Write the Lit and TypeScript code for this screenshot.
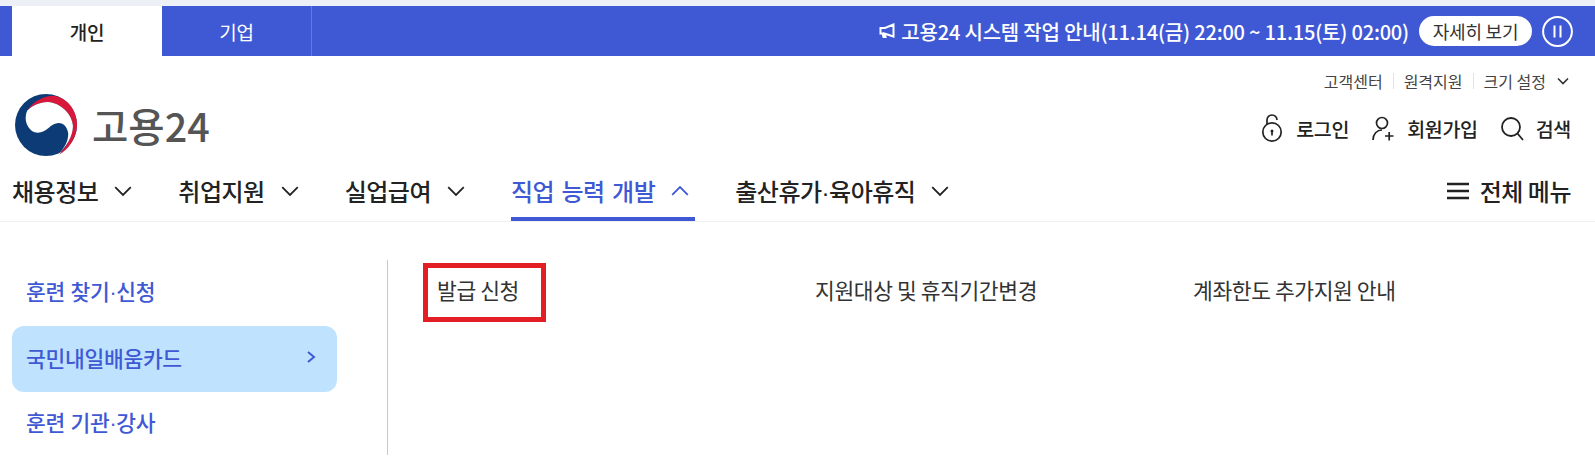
import { LitElement, html, css } from "lit";
import { customElement } from "lit/decorators.js";

const chevDown = html`<svg class="chev" viewBox="0 0 18 18" fill="none" stroke="currentColor" stroke-width="1.6"><path d="M2 5.5 9 12.5 16 5.5"/></svg>`;
const chevUp = html`<svg class="chev" viewBox="0 0 18 18" fill="none" stroke="currentColor" stroke-width="1.6"><path d="M2 12.5 9 5.5 16 12.5"/></svg>`;
const dot = html`<span class="dot">·</span>`;

@customElement("app-root")
export class AppRoot extends LitElement {
  static styles = css`
    :host { display: block; width: 1595px; height: 466px; overflow: hidden; background: #fff;
      font-family: "Noto Sans CJK KR", "Noto Sans", sans-serif; color: #222; padding-top: 6px; box-sizing: border-box;
      position: relative; }
    .dot { font-family: "Liberation Sans", sans-serif; }
    .strip { position: absolute; left: 0; top: 0; right: 0; height: 6px; background: #eef0f7; }
    .top { display: flex; height: 50px; background: #3f59d4; padding-left: 12px; align-items: stretch; color: #fff; }
    .tab { width: 150px; display: flex; align-items: center; justify-content: center; font-size: 19px; letter-spacing: -0.3px; }
    .tab.on { background: #fff; color: #222; font-weight: 500; }
    .tab.off { border-right: 1px solid #6478e0; box-sizing: border-box; }
    .notice { margin-left: auto; display: flex; align-items: center; padding-right: 22px; }
    .notice svg.horn { display: block; }
    .notice-text { font-size: 20px; font-weight: 500; margin-left: 6px; letter-spacing: -0.2px; white-space: nowrap; }
    .more { margin-left: 10px; width: 113px; height: 30px; border-radius: 15px; background: #fff; color: #333;
      font-size: 18px; display: flex; align-items: center; justify-content: center; letter-spacing: -0.2px; }
    .pause { margin-left: 10px; width: 31px; height: 31px; display: block; }
    .head { display: flex; justify-content: space-between; padding: 0 24px 0 15px; height: 109px; }
    .logo { display: flex; align-items: center; gap: 15px; padding-top: 28px; }
    .logo svg { width: 62px; height: 62px; display: block; }
    .logo span { font-size: 39.5px; font-weight: 500; color: #555; letter-spacing: 0; }
    .right { display: flex; flex-direction: column; align-items: flex-end; }
    .util { display: flex; align-items: center; height: 22px; margin-top: 14px; padding-right: 2px; font-size: 16px; color: #444; }
    .util span + span { margin-left: 10px; padding-left: 10px; border-left: 1px solid #e2e2e2; line-height: 16px; }
    .util svg { width: 12px; height: 12px; margin-left: 11px; color: #333; }
    .acts { display: flex; align-items: center; gap: 22px; margin-top: 21px; font-size: 19.5px; font-weight: 500; color: #222; letter-spacing: -0.3px; }
    .act { display: flex; align-items: center; gap: 12px; }
    .act svg { width: 24px; height: 30px; display: block; }
    nav { display: flex; align-items: stretch; height: 56px; padding: 0 24px 0 12px; border-bottom: 1px solid #efefef; box-sizing: content-box; }
    .ni { display: flex; align-items: center; font-size: 24px; font-weight: 500; margin-right: 40px; padding: 0 5px 1px 0; gap: 15px; letter-spacing: -0.5px; word-spacing: 2.5px; border-bottom: 4px solid transparent; height: 56px; box-sizing: border-box; }
    .ni.on { color: #3f59d4; border-bottom-color: #3f59d4; }
    .chev { width: 20px; height: 20px; display: block; }
    .all { margin-left: auto; display: flex; align-items: center; gap: 10px; font-size: 24px; font-weight: 500; letter-spacing: -0.5px; padding-bottom: 5px; }
    .all svg { width: 24px; height: 20px; display: block; }
    .body { display: flex; padding: 38px 0 0 12px; }
    .side { width: 325px; display: flex; flex-direction: column; }
    .si { height: 65px; display: flex; align-items: center; justify-content: space-between; padding: 0 20px 4px 14px; box-sizing: border-box; color: #3f59d4; font-size: 21.5px; font-weight: 500; border-radius: 12px; letter-spacing: -0.3px; word-spacing: 1px; }
    .si.first { height: 66px; padding-bottom: 6px; }
    .si.last { padding-bottom: 6px; }
    .si.on { background: #bfe3ff; height: 66px; }
    .si svg { width: 12px; height: 14px; }
    .main { margin-left: 50px; border-left: 1px solid #c9c9c9; height: 195px; flex: 1; display: grid; grid-template-columns: repeat(3, 378px); align-content: start; padding-left: 49px; }
    .mi { font-size: 21.5px; color: #333; letter-spacing: -0.4px; line-height: 28px; padding-top: 16px; }
    .mi b { font-weight: 400; position: relative; display: inline-block; }
    .mark { position: absolute; left: -14px; top: -13px; width: 123px; height: 59px; border: 5px solid #e31e24; box-sizing: border-box; }
  `;
  render() {
    return html`
      <div class="strip"></div>
      <div class="top">
        <div class="tab on">개인</div>
        <div class="tab off">기업</div>
        <div class="notice">
          <svg class="horn" width="16" height="16" viewBox="0 0 16 16" fill="none" stroke="#fff" stroke-width="2"><path d="M14.500 1.500 6 5H1.500v5.500H3.500l1 3.500h2l-1-3.500 9 3z"/></svg>
          <span class="notice-text">고용24 시스템 작업 안내(11.14(금) 22:00 ~ 11.15(토) 02:00)</span>
          <div class="more">자세히 보기</div>
          <svg class="pause" viewBox="0 0 31 31" fill="none" stroke="#fff" stroke-width="2"><circle cx="15.5" cy="15.5" r="14.4"/><path d="M12.5 9.5v12M18.5 9.5v12"/></svg>
        </div>
      </div>
      <div class="head">
        <div class="logo">
          <svg viewBox="0 0 184 184">
            <circle cx="92" cy="92" r="92" fill="#0c3b75"/>
            <path d="M36 50C55 20 85 6 115 5 160 12 186 55 184 95 182 130 160 165 130 180 152 158 172 125 172 95 170 60 135 26 97 24 75 24 50 35 36 50Z" fill="#d8173a"/>
            <path d="M36 50C50 35 75 24 97 24 135 26 170 60 172 95 172 125 152 158 128 178 148 160 158 140 158 118 156 100 145 86 130 86 105 86 95 115 67 115 45 115 22 85 36 50Z" fill="#fff"/>
          </svg>
          <span>고용24</span>
        </div>
        <div class="right">
          <div class="util"><span>고객센터</span><span>원격지원</span><span>크기 설정</span><svg viewBox="0 0 12 12" fill="none" stroke="currentColor" stroke-width="1.6"><path d="M1 3.500 6 8.500 11 3.500"/></svg></div>
          <div class="acts">
            <div class="act"><svg viewBox="0 0 24 30" fill="none" stroke="#222" stroke-width="1.7"><circle cx="12" cy="19" r="9.200"/><path d="M7 11.500V7a5 5 0 0 1 10 0"/><circle cx="12" cy="18" r="1.500" fill="#222" stroke="none"/><path d="M12 18v4.500"/></svg>로그인</div>
            <div class="act"><svg viewBox="0 0 24 30" fill="none" stroke="#222" stroke-width="1.7"><circle cx="11" cy="10" r="5.500"/><path d="M2 27c0-6 4-10 9-10"/><path d="M14 23h8.500M18.200 19v8.500"/></svg>회원가입</div>
            <div class="act"><svg viewBox="0 0 24 30" fill="none" stroke="#222" stroke-width="1.8"><circle cx="11" cy="14" r="9"/><path d="M17.500 20.500 23 27"/></svg>검색</div>
          </div>
        </div>
      </div>
      <nav>
        <div class="ni">채용정보${chevDown}</div>
        <div class="ni">취업지원${chevDown}</div>
        <div class="ni">실업급여${chevDown}</div>
        <div class="ni on">직업 능력 개발${chevUp}</div>
        <div class="ni"><span>출산휴가${dot}육아휴직</span>${chevDown}</div>
        <div class="all"><svg viewBox="0 0 24 20" fill="none" stroke="#222" stroke-width="2.600"><path d="M1 3h22M1 10h22M1 17h22"/></svg>전체 메뉴</div>
      </nav>
      <div class="body">
        <div class="side">
          <div class="si first"><span>훈련 찾기${dot}신청</span></div>
          <div class="si on">국민내일배움카드<svg viewBox="0 0 12 14" fill="none" stroke="currentColor" stroke-width="2"><path d="M3 2l6 5-6 5"/></svg></div>
          <div class="si last"><span>훈련 기관${dot}강사</span></div>
        </div>
        <div class="main">
          <div class="mi"><b>발급 신청<i class="mark"></i></b></div>
          <div class="mi">지원대상 및 휴직기간변경</div>
          <div class="mi">계좌한도 추가지원 안내</div>
        </div>
      </div>
    `;
  }
}
